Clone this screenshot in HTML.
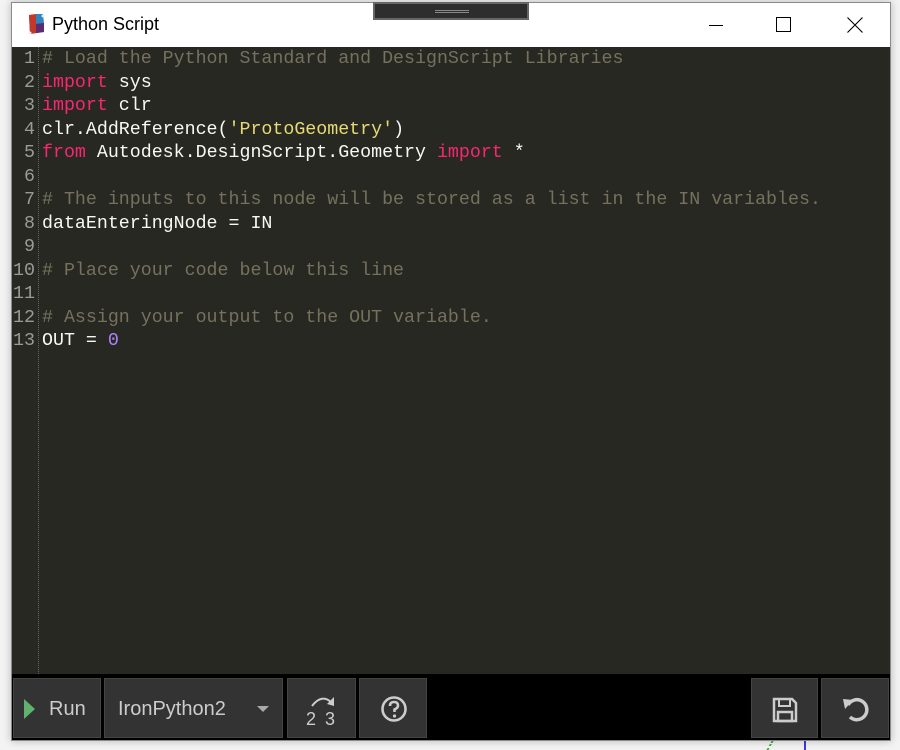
<!DOCTYPE html>
<html><head><meta charset="utf-8"><style>
*{margin:0;padding:0;box-sizing:border-box}
body{width:900px;height:750px;background:#f3f3f3;position:relative;overflow:hidden;font-family:"Liberation Sans",sans-serif}
#win{position:absolute;left:11px;top:2px;width:880px;height:739px;border:1px solid #8a8a8a;background:#000;box-shadow:0 0 8px rgba(0,0,0,.25)}
#title{position:absolute;left:0;top:0;width:878px;height:44px;background:#fff}
#title .t{position:absolute;left:40px;top:11px;font-size:18px;color:#000}
#drag{position:absolute;left:361px;top:-1px;width:156px;height:18px;background:#2d2d2d;border:2px solid #666}
#drag i{position:absolute;left:60px;top:6px;width:34px;height:3px;border-top:1px solid #888;border-bottom:1px solid #888}
#code{position:absolute;left:0;top:44px;width:878px;height:627px;background:#272822}
.ln{position:absolute;left:0;width:23px;text-align:right;color:#9a9b94}
.gut{position:absolute;left:26px;top:0;height:627px;border-left:1px dotted #666}
.l{position:absolute;left:30px;white-space:pre;color:#f8f8f2}
.ln,.l{font-family:"Liberation Mono",monospace;font-size:18.3px;line-height:23.5px;top:1px}
.c{color:#75715e}.k{color:#f92672}.s{color:#e6db74}.n{color:#ae81ff}
.b{position:absolute;top:675px;height:60px;background:#333;border:1px solid #444;color:#ccc;font-size:20px}
</style></head><body>
<div style="position:absolute;left:804px;top:741px;width:2px;height:9px;background:#3a3ae0"></div>
<div style="position:absolute;left:769px;top:741px;width:2px;height:9px;border-left:2px dotted #4a4;transform:skewX(-30deg)"></div>
<div id="win">
<div id="title">
<svg style="position:absolute;left:14px;top:10px" width="20" height="22" viewBox="0 0 20 22"><polygon points="3,2 17,1 18,19 4,21" fill="#7a3b5a"/><polygon points="3,2 10,1 10,20 4,21" fill="#c0392b"/><polygon points="10,1 17,1 18,10 10,11" fill="#2e86c1"/><polygon points="10,11 18,10 18,19 10,20" fill="#5b2c6f"/><circle cx="4" cy="20" r="1.5" fill="#eee"/><circle cx="17" cy="3" r="1.5" fill="#eee"/></svg>
<div class="t">Python Script</div>
<div id="drag"><i></i></div>
<div style="position:absolute;left:697px;top:22px;width:14px;height:1px;background:#000"></div>
<div style="position:absolute;left:764px;top:14px;width:15px;height:15px;border:1px solid #000"></div>
<svg style="position:absolute;left:835px;top:14px" width="16" height="16"><path d="M0.5 0.5L15.5 15.5M15.5 0.5L0.5 15.5" stroke="#000" stroke-width="1.1"/></svg>
</div>
<div id="code">
<div class="gut"></div>
<div class="ln">1<br>2<br>3<br>4<br>5<br>6<br>7<br>8<br>9<br>10<br>11<br>12<br>13</div>
<div class="l"><span class="c"># Load the Python Standard and DesignScript Libraries</span>
<span class="k">import</span> sys
<span class="k">import</span> clr
clr.AddReference(<span class="s">'ProtoGeometry'</span>)
<span class="k">from</span> Autodesk.DesignScript.Geometry <span class="k">import</span> *

<span class="c"># The inputs to this node will be stored as a list in the IN variables.</span>
dataEnteringNode = IN

<span class="c"># Place your code below this line</span>

<span class="c"># Assign your output to the OUT variable.</span>
OUT = <span class="n">0</span></div>
</div>
<div class="b" style="left:1px;width:88px"><svg style="position:absolute;left:10px;top:20px" width="12" height="20"><polygon points="0,0 11,10 0,20" fill="#5fb36f"/></svg><span style="position:absolute;left:35px;top:19px">Run</span></div>
<div class="b" style="left:92px;width:179px"><span style="position:absolute;left:13px;top:19px">IronPython2</span><svg style="position:absolute;left:152px;top:27px" width="12" height="7"><polygon points="0,0 12,0 6,6" fill="#aaa"/></svg></div>
<div class="b" style="left:275px;width:69px"><svg style="position:absolute;left:18px;top:14px" width="34" height="34" viewBox="0 0 34 34"><path d="M6 13 Q16 0 26 10" stroke="#ccc" stroke-width="2" fill="none"/><polygon points="21,11 28,4 28,13" fill="#ccc"/><text x="0" y="32" font-size="18" fill="#ccc" font-family="Liberation Sans">2</text><text x="19" y="32" font-size="18" fill="#ccc" font-family="Liberation Sans">3</text></svg></div>
<div class="b" style="left:347px;width:68px"><svg style="position:absolute;left:20px;top:16px" width="28" height="28" viewBox="0 0 28 28"><circle cx="14" cy="14" r="11.5" stroke="#ccc" stroke-width="2.6" fill="none"/><path d="M10 11 Q10 7 14 7 Q18 7 18 10.5 Q18 13 14.5 14.5 L14.5 17" stroke="#ccc" stroke-width="2.6" fill="none"/><circle cx="14.5" cy="21" r="1.6" fill="#ccc"/></svg></div>
<div class="b" style="left:739px;width:67px"><svg style="position:absolute;left:20px;top:18px" width="26" height="26" viewBox="0 0 26 26"><path d="M2 2 H20 L24 6 V24 H2 Z" stroke="#ccc" stroke-width="2.5" fill="none"/><rect x="7" y="2" width="11" height="7" stroke="#ccc" stroke-width="2" fill="none"/><rect x="6" y="15" width="14" height="9" stroke="#ccc" stroke-width="2.5" fill="none"/></svg></div>
<div class="b" style="left:809px;width:68px"><svg style="position:absolute;left:20px;top:16px" width="28" height="28" viewBox="0 0 28 28"><path d="M6 10 A10 10 0 1 1 8 22" stroke="#ccc" stroke-width="3.5" fill="none"/><polygon points="1,4 11,5 3,14" fill="#ccc"/></svg></div>
</div>
</body></html>
